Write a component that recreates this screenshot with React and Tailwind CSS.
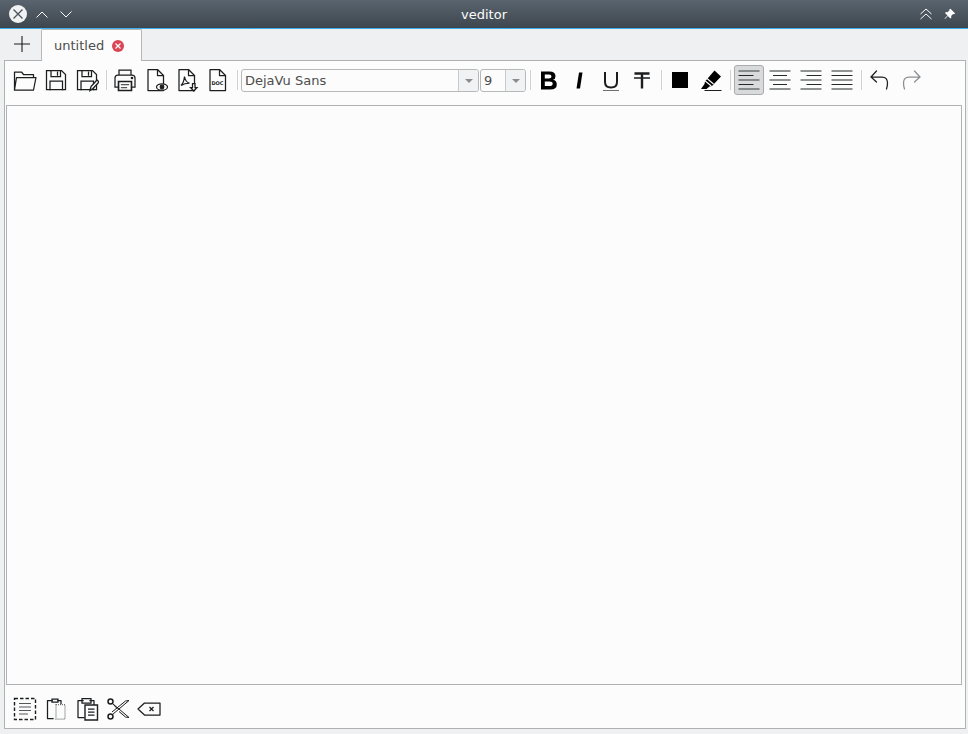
const Ic = ({ children, s = 24 }) => (
  <svg width={s} height={s} viewBox="0 0 24 24" fill="none" stroke="#1b1d1f" strokeWidth="1.250" strokeLinecap="square">{children}</svg>
);

const Btn = ({ children, active }) => (
  <div className={active ? "w-[30px] h-[30px] flex items-center justify-center rounded-[3px] border border-[#a9abad] bg-[#d9dadb]" : "w-[30px] h-[30px] flex items-center justify-center"}>{children}</div>
);

const Sep = () => (
  <div className="w-[8px] h-[20px] flex justify-center"><div className="w-px h-full bg-[#d0d1d2]" /></div>
);

const Open = () => <Ic><path d="M1.500 22V4h7l2 2.500h10V9.500M3.500 9.500H23L20.500 22H1.500Z" strokeLinejoin="round" /></Ic>;
const Floppy = ({ pen }) => (
  <Ic>
    <path d="M2.500 2.500h15l4 4v15h-19Z" />
    <path d="M7 2.500v6h9.500v-6M13.500 4v3M6 21.500V13h12.500v8.500" />
    {pen && <path d="M15 22.500l1-4 6-6.500 2 2-6 6.500Z" fill="#fcfcfc" />}
  </Ic>
);
const Printer = () => (
  <Ic>
    <path d="M6 7V2h12v5M5.500 19H2V10q0-3 3-3h14q3 0 3 3v9h-3.500" />
    <path d="M5.500 13.500h13v9h-13Z" strokeWidth="1.600" />
    <path stroke="#55585b" d="M8.500 16.500h7M8.500 19.500h5" />
    <circle cx="19" cy="10" r=".7" fill="#1b1d1f" />
  </Ic>
);
const Page = ({ children }) => (
  <Ic>
    <path d="M4 22.500v-21h9.500l6 6v15ZM13.500 1.500v6h6" strokeLinejoin="round" />
    {children}
  </Ic>
);

export default function App() {
  return (
    <div className="w-[968px] h-[734px] flex flex-col bg-[#eff0f1] overflow-hidden font-['DejaVu_Sans',sans-serif] text-[#31363b]">
      {/* title bar */}
      <div className="h-[28px] shrink-0 flex items-center bg-gradient-to-b from-[#5a646e] to-[#3e474f] px-[9px] text-[#fcfcfc]">
        <div className="flex-1 flex items-center">
          <div className="w-[18px] h-[18px] rounded-full bg-[#f1f2f3] flex items-center justify-center">
            <svg width="12" height="12" viewBox="0 0 12 12" fill="none" stroke="#4a535b" strokeWidth="1.300"><path d="M1.500 1.500l9 9M10.500 1.500l-9 9" /></svg>
          </div>
          <svg className="ml-[9px]" width="12" height="7" viewBox="0 0 12 7" fill="none" stroke="#fcfcfc" strokeWidth="1"><path d="M.5 6.500 6 1l5.500 5.500" /></svg>
          <svg className="ml-[12px]" width="12" height="7" viewBox="0 0 12 7" fill="none" stroke="#fcfcfc" strokeWidth="1"><path d="M.5 .5 6 6l5.500-5.500" /></svg>
        </div>
        <div className="text-[13px] leading-none">veditor</div>
        <div className="flex-1 flex items-center justify-end">
          <svg className="mr-[12px]" width="12" height="12" viewBox="0 0 12 12" fill="none" stroke="#fcfcfc" strokeWidth="1"><path d="M.5 6 6 1l5.500 5M.5 11 6 6l5.500 5" /></svg>
          <svg className="mr-[3px]" width="12" height="12" viewBox="0 0 12 12" fill="#fcfcfc"><path d="M6.500.8l4.700 4.700-1.400.8-.7-.3-2 2 .3 1.500-1 1L3.800 7.900 1 11l-.5-.5 3-2.900L1 5l1-1 1.500.3 2-2-.3-.7Z" /></svg>
        </div>
      </div>
      <div className="h-px shrink-0 bg-[#3daee9]" />
      {/* tab row */}
      <div className="h-[31px] shrink-0 flex items-end relative z-10">
        <div className="w-[41px] h-[31px] flex items-center justify-center pl-[3px] pb-px">
          <svg width="18" height="18" viewBox="0 0 18 18" stroke="#1b1d1f" strokeWidth="1.100"><path d="M9 1v16M1 9h16" /></svg>
        </div>
        <div className="w-[101px] h-[32px] bg-[#fcfcfc] border border-b-0 border-[#b6b7b9] rounded-t-[2px] flex items-center pl-[12px] mb-[-1px]">
          <span className="text-[#4d4d4d] text-[13px]">untitled</span>
          <div className="ml-[8px] w-[12px] h-[12px] rounded-full bg-[#da4453] flex items-center justify-center">
            <svg width="6" height="6" viewBox="0 0 6 6" stroke="#fff" strokeWidth="1.200"><path d="M.5 .5l5 5M5.500 .5l-5 5" /></svg>
          </div>
        </div>
      </div>
      {/* panel */}
      <div className="ml-[4px] mr-[2px] h-[669px] shrink-0 border border-[#b0b1b2] bg-[#fcfcfc] flex flex-col">
        <div className="h-[44px] shrink-0 flex items-start pl-[5px] pt-[4px]">
          <div className="flex items-center gap-px">
            <Btn><Open /></Btn>
            <Btn><Floppy /></Btn>
            <Btn><Floppy pen /></Btn>
          </div>
          <div className="mt-[5px]"><Sep /></div>
          <div className="flex items-center gap-px">
            <Btn><Printer /></Btn>
            <Btn>
              <Page>
                <ellipse cx="18" cy="19" rx="5.500" ry="3.200" fill="#fcfcfc" />
                <circle cx="18" cy="19" r="1.800" fill="#1b1d1f" />
              </Page>
            </Btn>
            <Btn>
              <Page>
                <path d="M6 17.500q3-3 3.500-9 1 6 5 6.500-5 0-8.500 2.500Z" />
                <path d="M17.500 15.500h2.500v4h2l-3.250 3.500-3.250-3.500h2Z" fill="#fcfcfc" />
              </Page>
            </Btn>
            <Btn>
              <Page>
                <text x="11.500" y="17" textAnchor="middle" fontSize="5" fontWeight="700" fill="#1b1d1f" stroke="none" fontFamily="DejaVu Sans">DOC</text>
              </Page>
            </Btn>
          </div>
          <div className="mt-[5px]"><Sep /></div>
          <div className="w-[238px] h-[23px] mt-[4px] rounded-[3px] border border-[#b7b8b9] bg-[#fcfcfc] flex items-center text-[13px] text-[#4d4d4d]">
            <span className="flex-1 pl-[3px]">DejaVu Sans</span>
            <div className="w-[20px] h-full border-l border-[#c9cacb] bg-[#f1f2f3] flex items-center justify-center rounded-r-[3px]">
              <svg width="8" height="4" viewBox="0 0 8 4" fill="#8a8d90"><path d="M0 0h8L4 4Z" /></svg>
            </div>
          </div>
          <div className="ml-px w-[46px] h-[23px] mt-[4px] rounded-[3px] border border-[#b7b8b9] bg-[#fcfcfc] flex items-center text-[13px] text-[#4d4d4d]">
            <span className="flex-1 pl-[3px]">9</span>
            <div className="w-[20px] h-full border-l border-[#c9cacb] bg-[#f1f2f3] flex items-center justify-center rounded-r-[3px]">
              <svg width="8" height="4" viewBox="0 0 8 4" fill="#8a8d90"><path d="M0 0h8L4 4Z" /></svg>
            </div>
          </div>
          <div className="mt-[5px]"><Sep /></div>
          <div className="flex items-center gap-px">
            <Btn>
              <Ic>
                <path fill="#000" stroke="none" fillRule="evenodd" d="M4 3.500h8.500q6 0 6 4.700 0 2.800-2.500 3.600 3.800.8 3.800 4.600 0 5.100-6.500 5.100H4Zm3.800 3v3.900h4q2.700 0 2.700-2t-2.700-1.900Zm0 6.900v4.600h4.600q3.300 0 3.300-2.300t-3.300-2.300Z" />
              </Ic>
            </Btn>
            <Btn>
              <Ic><path fill="#000" stroke="none" d="M11 4.500h3.500l-2.500 16H8.500Z" /></Ic>
            </Btn>
            <Btn>
              <Ic>
                <path strokeWidth="2" strokeLinecap="butt" d="M6 4v10q0 5.500 6 5.500t6-5.500V4" />
                <path stroke="#6d7072" strokeWidth="1" d="M4.500 22.500h15" />
              </Ic>
            </Btn>
            <Btn>
              <Ic>
                <path strokeWidth="2.400" strokeLinecap="butt" d="M4.500 5.500h15M12 5.500V20.500" />
                <path strokeWidth="1.500" strokeLinecap="butt" d="M4 10h16" />
              </Ic>
            </Btn>
          </div>
          <div className="mt-[5px]"><Sep /></div>
          <div className="flex items-center gap-px">
            <Btn><div className="w-[16px] h-[16px] bg-black" /></Btn>
            <Btn>
              <Ic>
                <path fill="#000" stroke="none" d="M15.500 2.500 22 8.500l-9 9.500-2.500.5-3 2.500H2l3.500-5 .5-2.500Z" />
                <path stroke="#fcfcfc" strokeWidth="1.100" strokeLinecap="butt" d="M8 10.500l6.500 5.500M6.300 13l6 5" />
                <path stroke="#1b1d1f" strokeWidth="1" d="M6 22.500h16" />
              </Ic>
            </Btn>
          </div>
          <div className="mt-[5px]"><Sep /></div>
          <div className="flex items-center gap-px">
            {[
              ["M1.500 3h21M1.500 12h21M1.500 21h21", "M1.500 7.500h15M1.500 16.500h15"],
              ["M1.500 3h21M1.500 12h21M1.500 21h21", "M5 7.500h14M5 16.500h14"],
              ["M1.500 3h21M1.500 12h21M1.500 21h21", "M7.500 7.500h15M7.500 16.500h15"],
              ["M1.500 3h21M1.500 12h21M1.500 21h21", "M1.500 7.500h21M1.500 16.500h21"],
            ].map(([a, b], i) => (
              <Btn key={i} active={i === 0}>
                <Ic>
                  <path stroke="#6e7173" strokeWidth="1.600" strokeLinecap="butt" d={a} />
                  <path stroke="#26282a" strokeWidth="1.100" strokeLinecap="butt" d={b} />
                </Ic>
              </Btn>
            ))}
          </div>
          <div className="mt-[5px]"><Sep /></div>
          <div className="flex items-center gap-px">
            <Btn>
              <Ic><path d="M8.500 3 3 9l5.500 5M3 9h11q5.500 0 5.500 6 0 3-1 6" strokeLinecap="round" /></Ic>
            </Btn>
            <Btn>
              <Ic><path stroke="#8a8d90" d="M15.500 3 21 9l-5.500 5M21 9H10q-5.500 0-5.500 6 0 3 1 6" strokeLinecap="round" /></Ic>
            </Btn>
          </div>
        </div>
        <div className="ml-[1px] mr-[3px] h-[580px] shrink-0 border border-[#b0b1b2] bg-[#fcfcfc]" />
        <div className="flex-1 flex items-start pt-[9px] pl-[5px] gap-px">
          <Btn>
            <Ic>
              <rect x="1.500" y="1.500" width="21" height="21" strokeWidth="1.400" strokeDasharray="3.500 2" strokeLinecap="butt" />
              <path stroke="#55585b" strokeWidth="1.200" strokeLinecap="butt" d="M6 6.500h12M6 10h12M6 13.500h12M6 17h9" />
            </Ic>
          </Btn>
          <Btn>
            <Ic>
              <path d="M8 3.500H3.500v18H9M14 3.500h3v3" strokeLinejoin="round" />
              <path d="M8 5V2h6v3Z" />
              <path stroke="#6d7072" strokeDasharray="1 1" strokeLinecap="butt" d="M12 7.500h9v14.500h-9Z" />
            </Ic>
          </Btn>
          <Btn>
            <Ic>
              <path d="M8 3.500H3v17h6M15 3.500h4v4" strokeLinejoin="round" />
              <path d="M7 6V1.500h9V6Z" />
              <path d="M10 8h12.500v15H10Z" fill="#fcfcfc" strokeWidth="1.400" />
              <path stroke="#1b1d1f" strokeLinecap="butt" d="M13 12h6.500M13 15h6.500M13 18h6.500" />
            </Ic>
          </Btn>
          <Btn>
            <Ic>
              <circle cx="4.500" cy="4.500" r="2.500" strokeWidth="1.500" />
              <circle cx="4.500" cy="19.500" r="2.500" strokeWidth="1.500" />
              <path strokeWidth="1" strokeLinecap="butt" d="M6.500 6.500 23 20.500 19.500 20 13 14.500M6.500 17.500 23 3.500 19.500 4 6 15" />
              <path strokeWidth="1" strokeLinecap="butt" d="M6.500 6.500l5 5.500" />
            </Ic>
          </Btn>
          <Btn>
            <Ic>
              <path d="M7.500 6H23V18H7.500L1 12Z" strokeLinejoin="round" />
              <path d="M12.500 10l4 4M16.500 10l-4 4" strokeLinecap="butt" />
            </Ic>
          </Btn>
        </div>
      </div>
    </div>
  );
}
